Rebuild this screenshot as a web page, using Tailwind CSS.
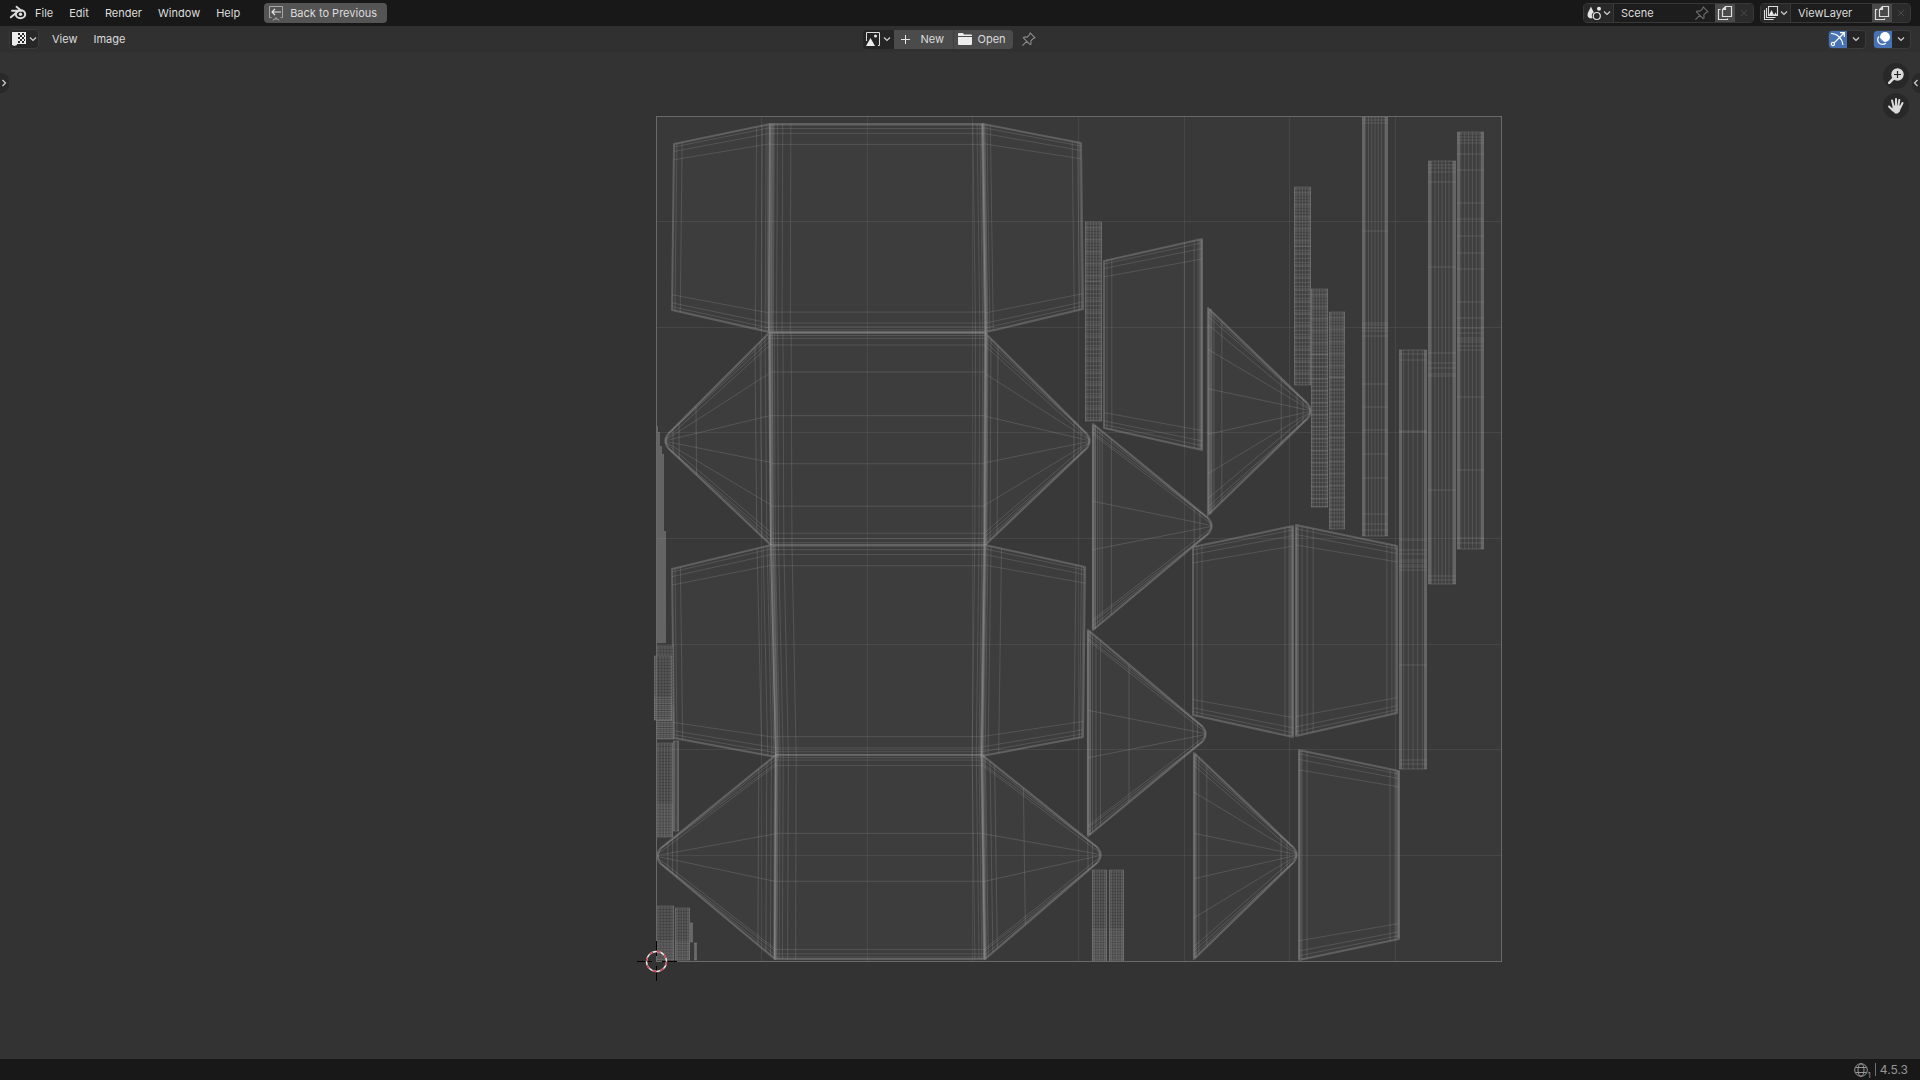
<!DOCTYPE html>
<html lang="en">
<head>
<meta charset="utf-8">
<meta name="viewport" content="width=device-width, initial-scale=1">
<title>Blender – UV Editor</title>
<script src="https://cdn.jsdelivr.net/npm/@tailwindcss/browser@4"></script>
</head>
<body class="flex h-screen min-h-96 flex-col overflow-hidden bg-[#333333] font-['Inter','Noto_Sans',sans-serif] text-[11px] leading-4 text-[#dcdcdc]">

<!-- Shared icon symbols -->
<svg class="hidden" aria-hidden="true">
  <symbol id="chev" viewBox="0 0 8 8"><path d="M1 2.5l3 3 3-3" fill="none" stroke="#d0d0d0" stroke-width="1.2"/></symbol>
  <symbol id="pin" viewBox="0 0 16 16"><path d="M9.800 1l5.200 5.200-1.800.6-2.700 2.700.2 3.300-1 .7L2.500 6.300l.7-1 3.300.2L9.200 2.800zM6 10L1.500 14.500" fill="none" stroke="currentColor" stroke-width="1.2" stroke-linejoin="round"/></symbol>
  <symbol id="dup" viewBox="0 0 16 16"><path d="M8.500 1.500h6v10h-9V4.500zM8.500 1.500v3h-3M3.500 4.500h-2v10h9v-1" fill="none" stroke="#dedede" stroke-width="1.200"/></symbol>
  <symbol id="x" viewBox="0 0 8 8"><path d="M1 1l6 6M7 1L1 7" fill="none" stroke="#484848" stroke-width="1"/></symbol>
</svg>

<!-- Top bar -->
<header class="flex h-[26px] shrink-0 items-center bg-[#181818] pr-[9px] pl-2">
  <button class="flex h-5 w-5 items-center justify-center" aria-label="Blender">
    <svg class="h-4 w-[18px]" viewBox="0 0 18 16"><g fill="none" stroke="#dcdcdc"><ellipse cx="11.500" cy="9.200" rx="4.700" ry="4" stroke-width="2"/><path d="M1.800 12.300L11 4.800M3 5.700h8M7.500 1.800l5 4" stroke-width="1.900" stroke-linecap="round"/></g><circle cx="11.500" cy="9.200" r="1.700" fill="#dcdcdc"/></svg>
  </button>
  <nav class="ml-[7px] flex items-center gap-4">
    <button>File</button><button>Edit</button><button>Render</button><button>Window</button><button>Help</button>
  </nav>
  <button class="ml-6 flex h-5 w-[123px] items-center gap-[7px] rounded bg-[#545454] pl-[5px] whitespace-nowrap">
    <svg class="h-[15px] w-[14px] shrink-0" viewBox="0 0 14 15" fill="none" stroke="#c8c8c8"><path d="M2.500 11.500h-2v-11h13v11h-2M4 14.500c0-2 6-2 6 0M7 11v2" stroke-width="1" opacity=".7"/><path d="M12 6H3M6 3L3 6l3 3" stroke-width="1.200" stroke="#e6e6e6"/></svg>
    Back to Previous
  </button>
  <div class="ml-auto flex h-5 overflow-hidden rounded border border-[#383838] bg-[#1d1d1d]">
    <button class="flex w-[30px] items-center justify-center gap-px border-r border-[#383838] bg-[#282828]" aria-label="Browse scene">
      <svg class="h-4 w-4" viewBox="0 0 16 16"><path d="M5 1.500C3.500 5 1.500 7.500 1.500 10c0 2.800 3 4 5.200 3C5 10.500 6 8 7.800 7.200 7 5.500 5.800 4 5 1.500z" fill="#e4e4e4"/><circle cx="13" cy="3.800" r="2" fill="#e4e4e4"/><circle cx="10.800" cy="11" r="3.500" fill="none" stroke="#e4e4e4" stroke-width="1.200"/></svg>
      <svg class="h-2 w-2"><use href="#chev"/></svg>
    </button>
    <input class="w-20 bg-transparent pl-[7px] outline-none" value="Scene" aria-label="Scene">
    <button class="flex w-[21px] items-center text-[#6c6c6c]" aria-label="Pin scene"><svg class="h-[15px] w-[15px]"><use href="#pin"/></svg></button>
    <button class="flex w-5 items-center justify-center bg-[#4a4a4a]" aria-label="New scene"><svg class="h-4 w-4"><use href="#dup"/></svg></button>
    <button class="flex w-[18px] items-center justify-center bg-[#2b2b2b]" aria-label="Delete scene"><svg class="h-2 w-2"><use href="#x"/></svg></button>
  </div>
  <div class="ml-[6px] flex h-5 overflow-hidden rounded border border-[#383838] bg-[#1d1d1d]">
    <button class="flex w-[30px] items-center justify-center gap-px border-r border-[#383838] bg-[#282828]" aria-label="Browse view layer">
      <svg class="h-4 w-4" viewBox="0 0 16 16"><path d="M5.500 1.500h9v9h-9zM3.500 3v9.500h9M1.500 5v9.500h9" fill="none" stroke="#dcdcdc" stroke-width="1.100"/><path d="M6 10l2.500-5 2.500 5 1.500-2.500L14 10z" fill="#e8e8e8"/></svg>
      <svg class="h-2 w-2"><use href="#chev"/></svg>
    </button>
    <input class="w-[81px] bg-transparent pl-[7px] outline-none" value="ViewLayer" aria-label="View layer">
    <button class="flex w-5 items-center justify-center bg-[#4a4a4a]" aria-label="New view layer"><svg class="h-4 w-4"><use href="#dup"/></svg></button>
    <button class="flex w-[18px] items-center justify-center bg-[#2b2b2b]" aria-label="Delete view layer"><svg class="h-2 w-2"><use href="#x"/></svg></button>
  </div>
</header>

<!-- Editor header -->
<div class="grid h-[26px] shrink-0 grid-cols-[1fr_auto_1fr] items-center bg-[#303030] pr-[9px] pl-[9px]">
  <div class="flex items-center">
    <button class="flex h-5 w-[30px] items-center justify-center gap-[3px] rounded border border-[#3b3b3b] bg-[#272727]" aria-label="Editor type">
      <svg class="h-[14px] w-[14px]" viewBox="0 0 14 14"><path d="M0 0h5v13l-2.500 1L0 13zM5 0h9v12H5z" fill="#ececec"/><path d="M6 1h2v2h2v2H8v2H6V5h2V3H6zM10 1h2v2h-2zM12 3h1v2h-1zM10 5h2v2h-2zM8 7h2v2H8zM6 9h2v2H6zM10 9h2v2h-2zM12 7h1v2h-1z" fill="#272727"/></svg>
      <svg class="h-2 w-2"><use href="#chev"/></svg>
    </button>
    <button class="ml-[13px]">View</button><button class="ml-4">Image</button>
  </div>
  <div class="flex items-center pr-[22px]">
    <div class="flex h-[19px] overflow-hidden rounded">
      <button class="flex w-[31px] items-center justify-center gap-[3px] bg-[#252525]" aria-label="Browse image">
        <svg class="h-[14px] w-[14px]" viewBox="0 0 14 14"><path d="M4 .5h9.500v13H12M.5 9V.5H4" fill="none" stroke="#dedede"/><path d="M0 14l4.500-8L9 14z" fill="#ededed"/><circle cx="9.500" cy="4" r="1.500" fill="#ededed"/></svg>
        <svg class="h-2 w-2"><use href="#chev"/></svg>
      </button>
      <button class="flex w-[60px] items-center border-r border-[#3d3d3d] bg-[#4b4b4b] pl-[7px]">
        <svg class="mr-[11px] h-[9px] w-[9px]" viewBox="0 0 9 9"><path d="M4.500 0v9M0 4.500h9" stroke="#e6e6e6"/></svg>New
      </button>
      <button class="flex w-[59px] items-center bg-[#4b4b4b] pl-1">
        <svg class="mr-[6px] h-3 w-[14px]" viewBox="0 0 14 12"><path d="M0 1q0-1 1-1h4l1 1.500h7q1 0 1 1V3H0zM0 4h14v7q0 1-1 1H1q-1 0-1-1z" fill="#ececec"/></svg>Open
      </button>
    </div>
    <button class="ml-2 text-[#8c8c8c]" aria-label="Pin image"><svg class="h-[15px] w-[15px]"><use href="#pin"/></svg></button>
  </div>
  <div class="flex justify-end gap-[7px]">
    <div class="flex h-[19px] w-[38px] overflow-hidden rounded border border-[#3b3b3b] bg-[#252525]">
      <button class="flex w-[18px] items-center justify-center bg-[#4772b3]" aria-label="Show gizmos"><svg class="h-4 w-4" viewBox="0 0 16 16" fill="none" stroke="#fff" stroke-width="1.200"><path d="M1 2.500c6 0 11 4.500 12 11.500M4 12L14 2M10 1.700h4.300V6"/><circle cx="2.900" cy="13" r="1.600"/></svg></button>
      <button class="flex flex-1 items-center justify-center" aria-label="Gizmo options"><svg class="h-2 w-2"><use href="#chev"/></svg></button>
    </div>
    <div class="flex h-[19px] w-[38px] overflow-hidden rounded border border-[#3b3b3b] bg-[#252525]">
      <button class="flex w-[18px] items-center justify-center bg-[#4772b3]" aria-label="Show overlays"><svg class="h-4 w-4" viewBox="0 0 16 16"><circle cx="10" cy="6" r="5" fill="#fff"/><path d="M4 5.500a4.600 4.600 0 1 0 6.800 6.500" fill="none" stroke="#fff" stroke-width="1.300"/><path d="M5.500 7.500a4.600 4.600 0 0 0 3 3" stroke="#4772b3" stroke-width="1" fill="none"/></svg></button>
      <button class="flex flex-1 items-center justify-center" aria-label="Overlay options"><svg class="h-2 w-2"><use href="#chev"/></svg></button>
    </div>
  </div>
</div>

<!-- UV canvas -->
<main class="relative min-h-0 flex-1">
  <svg id="uv" class="block h-full w-full" viewBox="0 52 1920 1007" role="img" aria-label="UV layout">
    <rect x="656.500" y="116.500" width="845" height="845" fill="#393939"/>
    <g id="mesh"></g>
    <rect x="656.500" y="116.500" width="845" height="845" fill="none" stroke="#696969"/>
    <g fill="none">
      <path d="M637 961.500h15M662 961.500h15M656.500 941v15M656.500 966v15" stroke="#000"/>
      <circle cx="656.500" cy="961.500" r="10" stroke="#e8e8e8" stroke-width="1.400"/>
      <circle cx="656.500" cy="961.500" r="10" stroke="#cf3c55" stroke-width="1.400" stroke-dasharray="3.927 3.927"/>
    </g>
  </svg>
  <button class="absolute top-[21px] left-0 flex h-5 w-[9px] items-center rounded-r-lg bg-[#292929]" aria-label="Show toolbar"><svg class="h-2 w-2 -rotate-90"><use href="#chev"/></svg></button>
  <button class="absolute top-[21px] right-0 flex h-5 w-2 items-center rounded-l-lg bg-[#292929]" aria-label="Show sidebar"><svg class="h-2 w-2 rotate-90"><use href="#chev"/></svg></button>
  <div class="absolute top-[11px] right-[11px] flex flex-col gap-1">
    <button class="flex h-[26px] w-[26px] items-center justify-center rounded-full bg-[#282828]" aria-label="Zoom"><svg class="h-4 w-4" viewBox="0 0 16 16"><circle cx="9.500" cy="6.500" r="6.200" fill="#dadada"/><path d="M5 11l-3.800 3.800" stroke="#dadada" stroke-width="2.600" stroke-linecap="round"/><path d="M9.500 3v7M6 6.500h7" stroke="#222" stroke-width="1.200"/></svg></button>
    <button class="flex h-[26px] w-[26px] items-center justify-center rounded-full bg-[#282828]" aria-label="Pan"><svg class="h-[18px] w-[18px]" viewBox="0 0 18 18" fill="none" stroke="#dadada" stroke-width="2" stroke-linecap="round"><path d="M6.500 9L5 3.500M9 8.500V2M11.300 9l1-6M13.300 10.500L15.500 6M2 9.500l4 4"/><path d="M5.800 8.500h7.400l1 1.500-1.500 4.500-2 2H8l-3-3.500z" fill="#dadada" stroke="none"/></svg></button>
  </div>
</main>

<!-- Status bar -->
<footer class="flex h-[21px] shrink-0 items-center justify-end bg-[#181818] pr-3 text-[12px] text-[#969696]">
  <svg class="h-[14px] w-[14px]" viewBox="0 0 14 14" fill="none" stroke="#969696"><circle cx="7" cy="7" r="6.300"/><ellipse cx="7" cy="7" rx="3" ry="6.300"/><path d="M1.500 4.500h11M1.500 9.500h11"/></svg>
  <span class="self-end text-[8px] leading-[10px]">1</span>
  <span class="mx-1 h-[13px] w-px bg-[#707070]"></span>
  <span>4.5.3</span>
</footer>

<script>
const mesh = document.getElementById('mesh');
const LINE = '#a0a0a0';
const add = (tag, attrs) => {
  const el = document.createElementNS('http://www.w3.org/2000/svg', tag);
  for (const k in attrs) el.setAttribute(k, attrs[k]);
  mesh.appendChild(el);
};
const mix = (p, q, t) => [p[0] + (q[0] - p[0]) * t, p[1] + (q[1] - p[1]) * t];
const stroke = (d, op, w = 1) => add('path', { d, fill: 'none', stroke: LINE, 'stroke-opacity': op, 'stroke-width': w, 'stroke-linejoin': 'round' });

// Island: four corners (TL, TR, BR, BL), loops across (us) and down (vs)
function island(c, us, vs) {
  const [a, b, r, l] = c;
  add('polygon', { points: c.join(' '), fill: '#3d3d3d' });
  let d = '';
  for (const u of us) d += `M${mix(a, b, u)}L${mix(l, r, u)}`;
  for (const v of vs) d += `M${mix(a, l, v)}L${mix(b, r, v)}`;
  stroke(d, .24);
  stroke(`M${a}L${b}L${r}L${l}Z`, .36, 2);
}
// Fan: base edge (x,y1)-(x,y2) narrowing to a rounded tip at (tx,ty)
function fan(p, q, tx, ty, us, vs) {
  const s = Math.sign(tx - p[0]), k = tx - 4 * s;
  const t = [k, ty - 8], o = [k, ty + 8];
  add('path', { d: `M${p}L${t}Q${tx + 3 * s} ${ty} ${o}L${q}Z`, fill: '#3d3d3d' });
  let d = '';
  for (const u of us) d += `M${mix(p, t, u)}L${mix(q, o, u)}`;
  for (const v of vs) d += `M${mix(p, q, v)}L${[k, ty - 5 + 10 * v]}L${[tx, ty - 2 + 4 * v]}`;
  const inner = (n) => `M${mix(p, q, n)}L${mix(t, o, n * .5)}M${mix(p, q, 1 - n)}L${mix(t, o, 1 - n * .5)}`;
  stroke(d + inner(.02) + inner(.04), .26);
  stroke(`M${p}L${t}Q${tx + 3 * s} ${ty} ${o}L${q}Z`, .38, 2.2);
}
// Seam: several loops running so close together that they read as one heavy line
const seam = (p, q, w = 4) => stroke(`M${p}L${q}`, .24, w);
// Strip: narrow ribbon with even columns and listed rows
function strip(x1, y1, x2, y2, cols, rows, edge = 1.4) {
  add('rect', { x: x1, y: y1, width: x2 - x1, height: y2 - y1, fill: '#3f3f3f' });
  let d = '';
  for (let i = 1; i < cols; i++) { const x = x1 + (x2 - x1) * i / cols; d += `M${x} ${y1}V${y2}`; }
  stroke(d, .22);
  stroke(rows.map(y => `M${x1} ${y}H${x2}`).join(''), .24);
  stroke(`M${x1 + edge / 2} ${y1}V${y2}M${x2 - edge / 2} ${y1}V${y2}`, .38, edge);
  stroke(`M${x1} ${y1}H${x2}M${x1} ${y2}H${x2}`, .3);
}
const every = (a, b, s) => { const o = []; for (let y = a; y < b; y += s) o.push(y); return o; };

const wingL = [.03, .085, .86, .92, .96, .98], wingR = [.02, .04, .075, .91, .965, .985];
const mid = [.01, .02, .035, .06, .098, .952, .972, .985, .993];
const rows = [.018, .045, .095, .908, .957, .98];
const cRows = [.006, .022, .045, .098, .904, .957, .975, .99];

// Column of four bands
island([[674,144],[770,124],[769,332],[672,310]], wingL, rows);
island([[770,124],[983,124],[986,332],[769,332]], mid, cRows);
island([[983,124],[1081,143],[1083,309],[986,332]], wingR, rows);

fan([769,333],[771,545], 665, 441, [.04,.09,.14,.73,.9,.96], [.06,.19,.39,.61,.81,.94]);
island([[770,333],[986,333],[985,546],[771,546]], mid, [.012,.025,.056,.183,.388,.614,.813,.94,.965,.985]);
fan([986,334],[985,545], 1090, 441, [.02,.05,.12,.88,.95], [.06,.19,.39,.61,.81,.94]);

island([[672,569],[771,545],[776,757],[674,738]], wingL, rows);
island([[771,545],[985,545],[982,757],[776,757]], mid, cRows);
island([[985,545],[1085,567],[1083,737],[982,756]], [.03,.06,.165,.91,.965,.985], rows);

fan([776,755],[775,959], 657, 856, [.04,.08,.15,.86,.9,.94], [.05,.386,.62,.95]);
island([[776,755],[982,755],[985,959],[775,959]], mid, [.012,.025,.052,.384,.619,.953,.975,.99]);
fan([982,755],[985,959], 1101, 855, [.03,.07,.11,.36,.92,.96], [.05,.386,.62,.95]);

// Heavy vertical seams down both sides of the bands
seam([772,124],[771,332]); seam([771,333],[772,545]); seam([773,545],[777,757]); seam([776,755],[775,959]);
seam([983,124],[986,332]); seam([986,333],[985,545]); seam([985,545],[982,757]); seam([983,755],[985,959]);

// Loose side panels
island([[1104,261],[1202,239],[1202,450],[1104,428]], [.03,.08,.82,.92,.96,.98], rows);
island([[1193,547],[1293,526],[1293,737],[1193,715]], [.04,.09,.92,.96,.98], rows);
island([[1296,525],[1397,546],[1397,713],[1296,736]], [.02,.06,.11,.17,.9,.95,.98], rows);
island([[1299,750],[1399,771],[1399,939],[1299,960]], [.03,.08,.91,.96,.98], rows);
seam([1201,240],[1201,449], 3); seam([1292,527],[1292,736], 3);
seam([1297,527],[1297,735], 3); seam([1300,751],[1300,959], 3); seam([1398,771],[1398,938], 3);

// Loose fans
fan([1208,308],[1208,515], 1311, 411, [.02,.04,.06,.14,.74,.9,.96], [.08,.2,.39,.61,.8,.92]);
fan([1093,424],[1093,630], 1212, 526, [.02,.04,.06,.08,.16,.88,.93], [.05,.375,.61,.95]);
fan([1088,630],[1088,836], 1206, 734, [.02,.04,.07,.11,.36,.92,.96], [.05,.39,.62,.95]);
fan([1194,753],[1194,959], 1297, 855, [.02,.05,.13,.88,.94], [.06,.19,.39,.61,.8,.94]);
seam([1210,309],[1210,514]); seam([1094,425],[1094,629]); seam([1089,631],[1089,835]); seam([1195,754],[1195,958], 3);

// Dense bevel ribbons
const dense = (x1, y1, x2, y2) => strip(x1, y1, x2, y2, 6, [...every(y1 + 2, y1 + (y2 - y1) * .3, 3), ...every(y1 + (y2 - y1) * .3, y2, 4), ...every(y1 + 6, y2, 12)]);
dense(1085,222,1102,421);
dense(1294,187,1311,385);
dense(1311,289,1328,507);
dense(1329,312,1345,529);

// Long ribbons
strip(1362,117,1388,536, 8, [120,123,231,323,325,328,331,336,384,407,430,454,478,514,524,530], 3);
strip(1399,350,1427,769, 6, [354,360,431,432,540,550,554,560,562,565,567,570,665,760,764], 3);
strip(1428,161,1456,584, 8, [165,168,172,182,267,353,363,368,374,376,490,576,580], 3);
strip(1457,132,1484,549, 7, [134,137,140,143,154,170,203,219,236,253,269,302,318,328,333,338,340,342,346,350,397,470,538,543], 3);

// Small ribbons along the bottom and left edge
const fine = (x1, y1, x2, y2) => strip(x1, y1, x2, y2, 6, [...every(y1 + 2, y2, 3), ...every(y1 + (y2 - y1) * .65, y2, 2)]);
fine(1092,870,1107,961);
fine(1109,870,1124,961);
fine(656,646,674,739);
fine(654,656,672,720);
fine(656,743,673,837);
strip(673,741,679,831, 4, []);
fine(656,906,674,960);
fine(675,908,690,960);
strip(690,923,693,942, 2, []);
strip(694,943,697,960, 2, []);
for (const [x, y] of [[656,426],[658,432],[660,446],[662,454],[664,531]])
  add('rect', { x, y, width: 2, height: 643 - y, fill: '#646464' });

// Grid in eighths of the tile
let g = '';
for (let i = 1; i < 8; i++) { const o = Math.floor(845 * i / 8); g += `M${656.5 + o} 117V961M657 ${116.5 + o}H1501`; }
stroke(g, .13);
</script>
</body>
</html>
